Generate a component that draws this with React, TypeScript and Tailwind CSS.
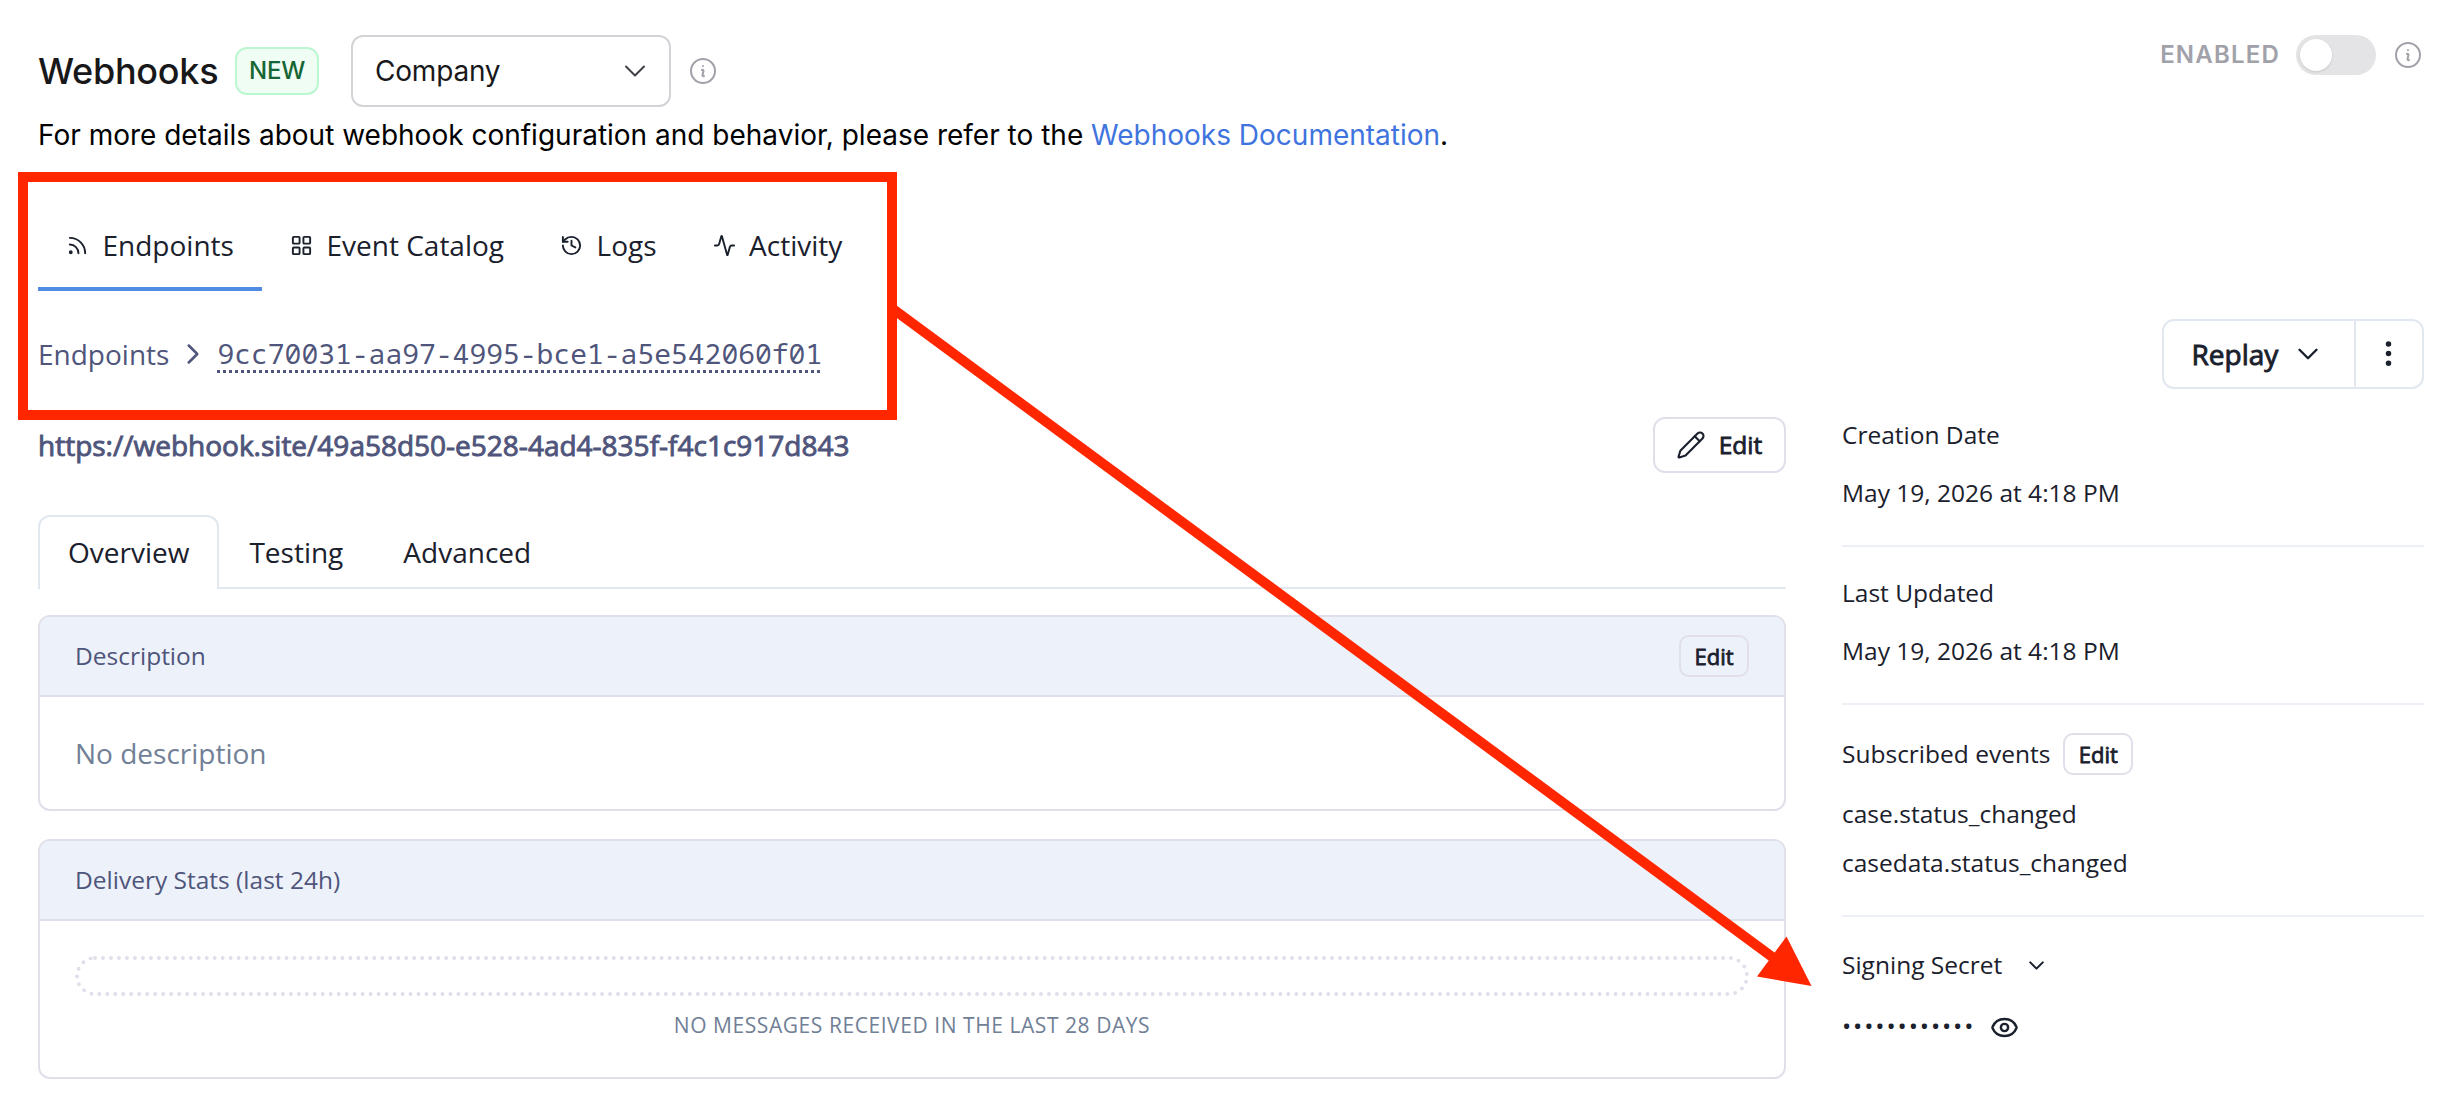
import type { ReactNode } from 'react';
import {
  Activity,
  ChevronDown,
  ChevronRight,
  EllipsisVertical,
  Eye,
  History,
  LayoutGrid,
  Pencil,
  Rss,
} from 'lucide-react';
import type { LucideIcon } from 'lucide-react';

const NAV_ITEMS: { label: string; icon: LucideIcon }[] = [
  { label: 'Endpoints', icon: Rss },
  { label: 'Event Catalog', icon: LayoutGrid },
  { label: 'Logs', icon: History },
  { label: 'Activity', icon: Activity },
];

const EVENTS = ['case.status_changed', 'casedata.status_changed'];

function InfoIcon() {
  return (
    <svg
      viewBox="0 0 24 24"
      fill="none"
      stroke="currentColor"
      strokeWidth={1.5}
      strokeLinecap="round"
      strokeLinejoin="round"
      className="w-8 h-8 shrink-0 text-[#a1a1aa]"
    >
      <path d="m11.25 11.25.041-.02a.75.75 0 0 1 1.063.852l-.708 2.836a.75.75 0 0 0 1.063.853l.041-.021M21 12a9 9 0 1 1-18 0 9 9 0 0 1 18 0Zm-9-3.75h.008v.008H12V8.25Z" />
    </svg>
  );
}

function SmallEditButton() {
  return (
    <button
      type="button"
      className="flex h-[42px] w-[70px] items-center justify-center rounded-[10px] border-2 border-[#e0dfea] pb-px text-[22px] text-[#1a202c] [-webkit-text-stroke:0.8px]"
    >
      Edit
    </button>
  );
}

function Panel({
  title,
  action,
  children,
}: {
  title: string;
  action?: ReactNode;
  children: ReactNode;
}) {
  return (
    <section className="overflow-hidden rounded-xl border-2 border-[#e0dfea]">
      <div className="flex h-20 items-center justify-between border-b-2 border-[#e0dfea] bg-[#edf2fa] px-[35px] text-[24.5px] text-[#4f557b]">
        <h3>{title}</h3>
        {action}
      </div>
      {children}
    </section>
  );
}

function DateBlock({ label, value }: { label: string; value: string }) {
  return (
    <div className="border-b-2 border-[#edf0f7] pb-[34px]">
      <p>{label}</p>
      <p className="mt-[22px]">{value}</p>
    </div>
  );
}

export default function App() {
  return (
    <div className="relative h-[1108px] w-[2460px] overflow-hidden bg-white pt-[35px] pr-9 pl-[38px] font-['Open_Sans',sans-serif] text-[28px] leading-10 text-[#1a202c]">
      {/* Header */}
      <header className="flex items-start justify-between font-['Inter',sans-serif]">
        <div className="flex h-[72px] items-center text-[#18181b]">
          <h1 className="w-[182px] text-4xl font-medium tracking-[-0.25px]">Webhooks</h1>
          <span className="ml-[15px] flex h-12 w-[84px] items-center justify-center rounded-xl border-2 border-[#bbf7d0] bg-[#f0fdf4] text-2xl font-medium tracking-[-0.2px] text-[#166534]">
            NEW
          </span>
          <button
            type="button"
            className="ml-8 flex h-[72px] w-[320px] items-center justify-between rounded-xl border-2 border-[#d4d4d8] pr-4 pl-[22px] tracking-[-0.2px]"
          >
            Company
            <ChevronDown className="w-9 h-9 text-[#3f3f46]" strokeWidth={1.3} />
          </button>
          <span className="ml-4">
            <InfoIcon />
          </span>
        </div>
        <div className="flex h-10 items-center">
          <span className="text-2xl font-semibold tracking-[0.05em] text-[#a1a1aa]">
            ENABLED
          </span>
          <span className="ml-4 flex h-10 w-20 items-center rounded-full bg-[#e4e4e6] p-1">
            <span className="h-8 w-8 rounded-full bg-white shadow-sm" />
          </span>
          <span className="ml-4">
            <InfoIcon />
          </span>
        </div>
      </header>
      <p className="mt-2 font-['Inter',sans-serif] text-black">
        For more details about webhook configuration and behavior, please refer
        to the <a className="text-[#3f74de]">Webhooks Documentation</a>.
      </p>

      {/* Main navigation */}
      <nav className="mt-12 flex">
        {NAV_ITEMS.map(({ label, icon: Icon }, index) => (
          <a
            key={label}
            className={
              index === 0
                ? 'flex h-[88px] w-[224px] items-center gap-[13.5px] border-b-4 border-[#4f8ce2] pl-7'
                : 'flex h-[88px] items-center gap-[13.5px] border-b-4 border-transparent px-7'
            }
          >
            <Icon className="w-[23px] h-[23px] shrink-0" strokeWidth={2} />
            {label}
          </a>
        ))}
      </nav>

      {/* Breadcrumb and endpoint actions */}
      <div className="mt-7 flex h-[70px] items-center justify-between">
        <div className="flex items-center text-[#4f557b]">
          <span>Endpoints</span>
          <ChevronRight className="mx-[7px] w-[34px] h-[34px]" strokeWidth={1.8} />
          <span className="mb-0.5 bg-[repeating-linear-gradient(90deg,#4f557b_0_3px,transparent_3px_6px)] bg-[length:100%_3px] bg-bottom bg-no-repeat font-['Noto_Sans_Mono','DejaVu_Sans_Mono',monospace]">
            9cc70031-aa97-4995-bce1-a5e542060f01
          </span>
        </div>
        <div className="flex h-[70px] w-[262px] rounded-xl border-2 border-[#e2e8f0]">
          <button
            type="button"
            className="flex w-[192px] items-center gap-[13px] border-r-2 border-[#e2e8f0] pl-[27.5px] pb-px [-webkit-text-stroke:0.9px]"
          >
            Replay
            <ChevronDown className="w-[34px] h-[34px]" strokeWidth={1.7} />
          </button>
          <button
            type="button"
            className="flex flex-1 items-center justify-center pr-0.5 pb-px"
          >
            <EllipsisVertical className="w-[33px] h-[33px]" strokeWidth={2} />
          </button>
        </div>
      </div>

      <div className="mt-7 flex gap-14">
        <main className="w-[1748px]">
          <div className="flex h-14 items-center justify-between">
            <h2 className="pb-px text-[#4f557b] [-webkit-text-stroke:0.9px]">
              https://webhook.site/49a58d50-e528-4ad4-835f-f4c1c917d843
            </h2>
            <button
              type="button"
              className="flex h-14 w-[133px] items-center justify-center gap-[13px] rounded-xl border-2 border-[#e0dfea] pr-px text-[24.5px] [-webkit-text-stroke:0.8px]"
            >
              <Pencil className="w-[30px] h-[30px]" strokeWidth={1.7} />
              Edit
            </button>
          </div>

          <div className="mt-[42px] flex h-[74px]">
            <a className="flex items-center rounded-t-xl border-2 border-b-0 border-[#e2e8f0] px-7 pb-[3px]">
              Overview
            </a>
            <a className="flex items-center border-b-2 border-[#e2e8f0] px-[30px] pt-px">
              Testing
            </a>
            <a className="flex flex-1 items-center border-b-2 border-[#e2e8f0] px-[30px] pt-px">
              Advanced
            </a>
          </div>

          <div className="mt-[26px] flex flex-col gap-7">
            <Panel title="Description" action={<SmallEditButton />}>
              <p className="flex h-28 items-center px-[35px] text-[#718096]">
                No description
              </p>
            </Panel>
            <Panel title="Delivery Stats (last 24h)">
              <div className="h-[156px] px-[35px] pt-[35px]">
                <div className="h-10 rounded-full border-4 border-dotted border-[#e0dfea]" />
                <p className="mt-3.5 text-center text-[21px] leading-[30px] tracking-[0.56px] text-[#718096]">
                  NO MESSAGES RECEIVED IN THE LAST 28 DAYS
                </p>
              </div>
            </Panel>
          </div>
        </main>

        <aside className="w-[582px] text-[24.5px] leading-9">
          <DateBlock label="Creation Date" value="May 19, 2026 at 4:18 PM" />
          <div className="mt-7">
            <DateBlock label="Last Updated" value="May 19, 2026 at 4:18 PM" />
          </div>
          <div className="mt-7 border-b-2 border-[#edf0f7] pb-7">
            <div className="flex items-center gap-[13px]">
              Subscribed events
              <SmallEditButton />
            </div>
            <ul className="mt-3.5 leading-[49px]">
              {EVENTS.map((event) => (
                <li key={event}>{event}</li>
              ))}
            </ul>
          </div>
          <div className="mt-[30px]">
            <div className="flex items-center">
              Signing Secret
              <ChevronDown className="ml-[22px] w-[25px] h-[25px]" />
            </div>
            <div className="mt-[26px] flex h-9 items-center gap-[15px]">
              <span className="mb-0.5 tracking-[1.9px]">••••••••••••</span>
              <Eye className="w-[29px] h-[29px]" strokeWidth={2} />
            </div>
          </div>
        </aside>
      </div>

      {/* Callout pointing from the endpoint header to its signing secret */}
      <div className="absolute top-[172px] left-[18px] h-[248px] w-[879px] border-10 border-[#ff2600]" />
      <svg
        viewBox="0 0 2460 1108"
        className="pointer-events-none absolute inset-0 h-[1108px] w-[2460px]"
      >
        <line x1="893" y1="309" x2="1775" y2="959" stroke="#ff2600" strokeWidth="10" />
        <path d="M1811.5 986 1786.5 936.5 1757 976.5Z" fill="#ff2600" />
      </svg>
    </div>
  );
}
